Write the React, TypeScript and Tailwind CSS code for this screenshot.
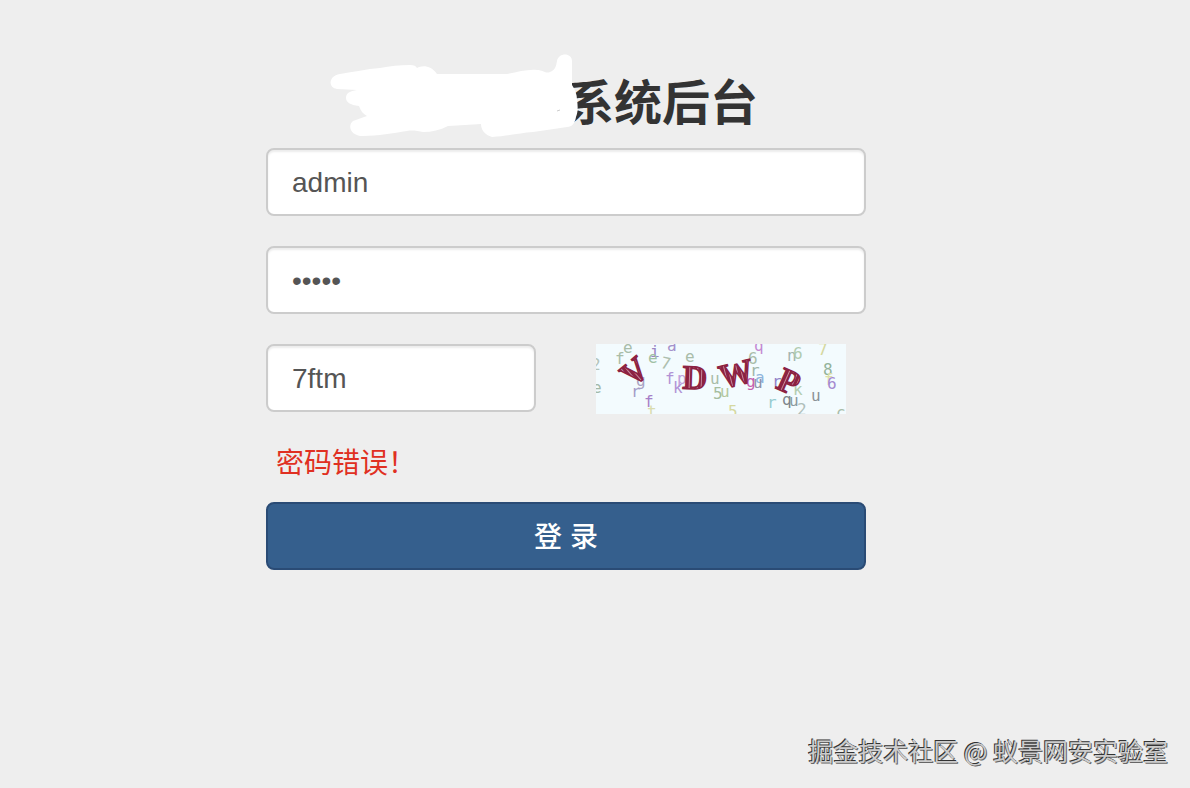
import React from "react";

type Glyph = [char: string, x: number, y: number, color: string, rotate?: number];

const noise: Glyph[] = [
  ["e", 27, 9, "#a9bda9"],
  ["f", 19, 20, "#a9bda9"],
  ["2", -5, 26, "#b4c4bb"],
  ["e", -4, 49, "#a3b8a8"],
  ["i", 54, 13, "#9a86c4"],
  ["a", 71, 7, "#a592cc"],
  ["e", 52, 19, "#9fc0a4"],
  ["7", 65, 25, "#aebfae", 12],
  ["e", 89, 18, "#a9bda9"],
  ["f", 69, 40, "#b193d6"],
  ["p", 81, 40, "#c0a3dd"],
  ["k", 77, 49, "#b193d6"],
  ["g", 40, 42, "#a9a3c4"],
  ["r", 35, 53, "#a39bc8"],
  ["f", 48, 63, "#a67fc8"],
  ["t", 51, 73, "#d9dcae"],
  ["u", 114, 40, "#a9bda9"],
  ["5", 117, 55, "#a5bda0"],
  ["u", 124, 53, "#b5c8a0"],
  ["q", 158, 7, "#c48ad2"],
  ["6", 152, 20, "#a9bda9"],
  ["r", 154, 32, "#9fb5a9"],
  ["a", 159, 39, "#8fb4dc"],
  ["g", 150, 43, "#c55fb0"],
  ["u", 157, 44, "#8f93a8"],
  ["n", 191, 17, "#a3b5b0"],
  ["6", 197, 15, "#b0cbb0"],
  ["7", 222, 11, "#d6d8a0"],
  ["8", 227, 31, "#93b39b"],
  ["f", 228, 41, "#dde0a8"],
  ["6", 231, 45, "#a58ad0"],
  ["r", 176, 43, "#8f80c8"],
  ["k", 197, 51, "#b2cdb0"],
  ["u", 215, 57, "#8b9398"],
  ["q", 186, 61, "#7d868c"],
  ["u", 193, 62, "#8b9aa0"],
  ["2", 201, 71, "#b0c0bb"],
  ["r", 171, 64, "#96cbd0"],
  ["5", 132, 73, "#d6d8a0"],
  ["c", 240, 74, "#a9bda9"],
];

const letters: Glyph[] = [
  ["V", 38, 27, "#8c2242", -40],
  ["D", 99, 33, "#8c2242", 2],
  ["W", 140, 29, "#8c2242", -14],
  ["P", 193, 37, "#8c2242", 24],
];

function Captcha() {
  return (
    <svg viewBox="0 0 250 70" className="h-[70px] w-[250px] bg-[#f3fbfe]" role="img" aria-label="验证码">
      <defs>
        <pattern id="hatch" width="4" height="4" patternUnits="userSpaceOnUse">
          <rect width="4" height="4" fill="#8c2242" />
          <rect x="1" width="1" height="4" fill="#c78a9e" />
        </pattern>
      </defs>
      <g fontFamily="'DejaVu Sans Mono', monospace" fontSize="16">
        {noise.map(([char, x, y, color, rotate], i) => (
          <text key={i} x={x} y={y} fill={color} transform={`rotate(${rotate ?? 0} ${x + 5} ${y - 5})`}>
            {char}
          </text>
        ))}
      </g>
      <g fontFamily="'Liberation Serif', serif" fontSize="34" fontWeight="bold" textAnchor="middle">
        {letters.map(([char, x, y, color, rotate]) => (
          <text
            key={char}
            x={x}
            y={y + 12}
            fill="url(#hatch)"
            stroke={color}
            strokeWidth="1.5"
            transform={`rotate(${rotate ?? 0} ${x} ${y})`}
          >
            {char}
          </text>
        ))}
      </g>
    </svg>
  );
}

function Scribble() {
  return (
    <svg viewBox="0 0 250 84" className="relative -mr-2 h-[84px] w-[250px] shrink-0 overflow-visible" aria-hidden="true">
      <path
        fill="#ffffff"
        d="M7 33C-2 32 -2 20 10 18C24 16 36 13 50 12C60 10 70 9 80 9C84 9 86 10 87 12C92 9 101 9 107 18L177 18C188 16 198 13 207 14C213 14 216 18 220 16C225 14 226 11 227 5C229 -4 242 -3 242 5V29C245 34 247 38 247 44C248 50 248 56 246 61C245 67 242 71 237 71C226 73 215 74 203 76C190 77 178 80 162 81C155 79 151 74 151 68C140 69 130 69 118 70C110 74 102 76 93 76C88 75 82 74 77 75C63 77 48 80 33 80C21 80 17 70 23 65C28 63 32 62 37 60C33 58 31 55 29 50C20 49 16 46 16 42C16 37 20 35 27 34Z"
      />
      <path d="M227 55l3 -1" stroke="#cccccc" strokeWidth="1" />
    </svg>
  );
}

const field =
  "block h-[68px] rounded-lg border-2 border-[#cccccc] bg-white px-6 pt-0.5 text-[28px] text-[#555555] shadow-[inset_0_2px_2px_rgba(0,0,0,0.075)] outline-none";

export default function App() {
  return (
    <div className="flex min-h-screen flex-col justify-between bg-[#eeeeee] font-['Liberation_Sans','Noto_Sans_CJK_SC',sans-serif]">
      <main className="px-6 pt-14 md:pr-[82px]">
        <form className="mx-auto max-w-[600px]" onSubmit={(e) => e.preventDefault()}>
          <h1 className="flex h-[92px] items-start pl-16 text-5xl font-bold text-[#333333]">
            <Scribble />
            <span className="-ml-1.5 pt-6 whitespace-nowrap">系统后台</span>
          </h1>
          <input aria-label="用户名" type="text" defaultValue="admin" className={`${field} w-full`} />
          <input aria-label="密码" type="password" defaultValue="admin" className={`${field} mt-[30px] w-full`} />
          <div className="mt-[30px] flex items-start gap-[60px]">
            <input aria-label="验证码" type="text" defaultValue="7ftm" className={`${field} w-[45%]`} />
            <Captcha />
          </div>
          <p role="alert" className="mt-[30px] px-2.5 text-[28px] leading-[40px] text-[#e03022]">
            密码错误！
          </p>
          <button
            type="submit"
            className="mt-[18px] h-[68px] w-full rounded-lg border-2 border-[#2a4b75] bg-[#355f8d] pt-1 text-[28px] font-medium text-white"
          >
            登 录
          </button>
        </form>
      </main>
      <footer className="px-[22px] pb-5 text-right font-['Noto_Sans_CJK_SC',sans-serif] text-[25px] leading-9 text-[#cccccc] [text-shadow:-1px_-1px_0_#333333,1px_1px_0_#666666]">
        掘金技术社区 @ 蚁景网安实验室
      </footer>
    </div>
  );
}
